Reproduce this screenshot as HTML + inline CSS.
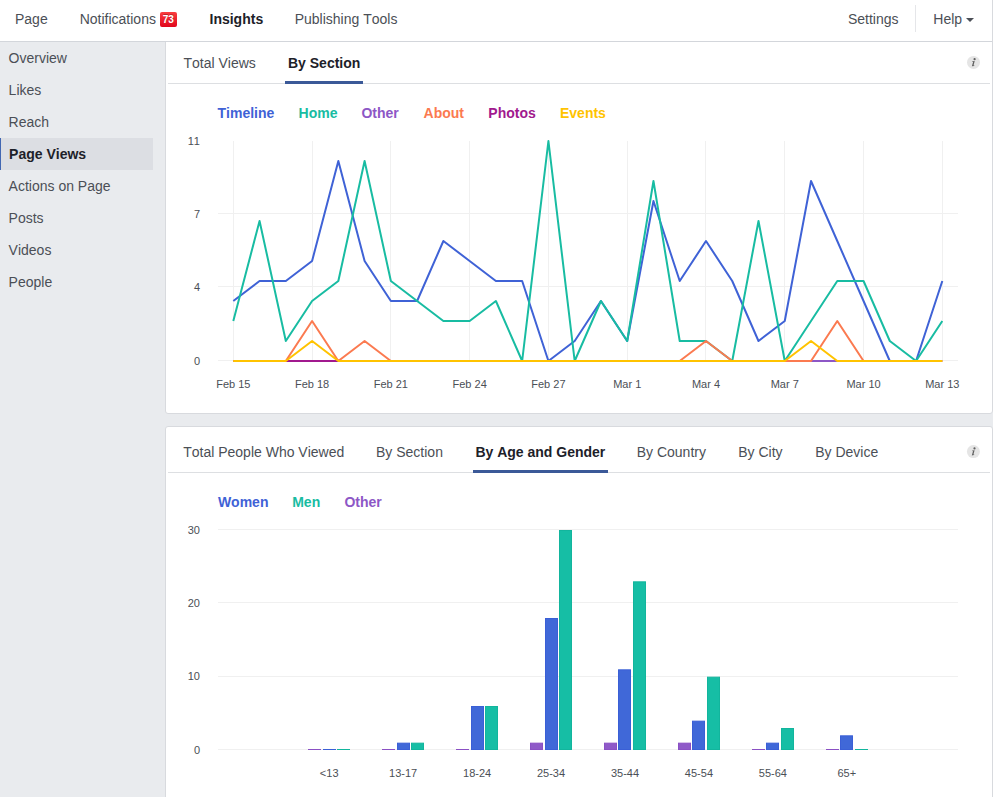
<!DOCTYPE html>
<html><head><meta charset="utf-8"><title>Insights</title>
<style>
html,body{margin:0;padding:0;width:993px;height:797px;overflow:hidden;background:#e9ebee;font-family:"Liberation Sans", sans-serif;}
.t{position:absolute;white-space:nowrap;font-family:"Liberation Sans", sans-serif;font-kerning:none;}
</style></head><body>
<div style="position:absolute;left:0px;top:0px;width:993px;height:797px;background:#e9ebee;"></div>
<div style="position:absolute;box-sizing:border-box;left:165px;top:38px;width:828px;height:376px;background:#fff;border:1px solid #d8dade;border-radius:0 0 3px 3px"></div>
<div style="position:absolute;box-sizing:border-box;left:165px;top:426px;width:828px;height:400px;background:#fff;border:1px solid #d8dade;border-radius:3px"></div>
<div style="position:absolute;left:0px;top:0px;width:993px;height:41px;background:#ffffff;"></div>
<div style="position:absolute;left:0px;top:41px;width:992px;height:1px;background:#d3d6db;"></div>
<div style="position:absolute;left:992px;top:0px;width:1px;height:42px;background:#d8dade;"></div>
<div class="t" style="left:15.00px;top:11.15px;font-size:14px;line-height:16px;font-weight:400;color:#4b4f56;">Page</div>
<div class="t" style="left:79.70px;top:11.15px;font-size:14px;line-height:16px;font-weight:400;color:#4b4f56;">Notifications</div>
<div style="position:absolute;left:160px;top:12px;width:17px;height:15px;border-radius:2px;background:linear-gradient(#fa3e3e,#e0061c);"></div>
<div class="t" style="left:162.70px;top:14.14px;font-size:10px;line-height:12px;font-weight:700;color:#fff;text-shadow:0 -1px 0 rgba(0,0,0,0.25)">73</div>
<div class="t" style="left:209.50px;top:11.15px;font-size:14px;line-height:16px;font-weight:700;color:#1d2129;">Insights</div>
<div class="t" style="left:294.70px;top:11.15px;font-size:14px;line-height:16px;font-weight:400;color:#4b4f56;">Publishing Tools</div>
<div class="t" style="left:847.90px;top:11.15px;font-size:14px;line-height:16px;font-weight:400;color:#4b4f56;">Settings</div>
<div style="position:absolute;left:915px;top:5px;width:1px;height:27px;background:#e5e6e9;"></div>
<div class="t" style="left:933.30px;top:11.15px;font-size:14px;line-height:16px;font-weight:400;color:#4b4f56;">Help</div>
<div style="position:absolute;left:965.8px;top:17.5px;width:0;height:0;border-left:4px solid transparent;border-right:4px solid transparent;border-top:4px solid #4b4f56"></div>
<div style="position:absolute;left:0px;top:138px;width:153px;height:32px;background:#dcdee3;"></div>
<div style="position:absolute;left:0px;top:138px;width:1px;height:32px;background:#4267b2;"></div>
<div class="t" style="left:8.60px;top:50.15px;font-size:14px;line-height:16px;font-weight:400;color:#4b4f56;">Overview</div>
<div class="t" style="left:8.60px;top:82.15px;font-size:14px;line-height:16px;font-weight:400;color:#4b4f56;">Likes</div>
<div class="t" style="left:8.60px;top:114.15px;font-size:14px;line-height:16px;font-weight:400;color:#4b4f56;">Reach</div>
<div class="t" style="left:9.10px;top:146.15px;font-size:14px;line-height:16px;font-weight:700;color:#1d2129;">Page Views</div>
<div class="t" style="left:8.60px;top:178.15px;font-size:14px;line-height:16px;font-weight:400;color:#4b4f56;">Actions on Page</div>
<div class="t" style="left:8.60px;top:210.15px;font-size:14px;line-height:16px;font-weight:400;color:#4b4f56;">Posts</div>
<div class="t" style="left:8.60px;top:242.15px;font-size:14px;line-height:16px;font-weight:400;color:#4b4f56;">Videos</div>
<div class="t" style="left:8.60px;top:274.15px;font-size:14px;line-height:16px;font-weight:400;color:#4b4f56;">People</div>
<div style="position:absolute;left:168px;top:83px;width:822px;height:1px;background:#dddfe2;"></div>
<div class="t" style="left:183.50px;top:55.15px;font-size:14px;line-height:16px;font-weight:400;color:#4b4f56;">Total Views</div>
<div class="t" style="left:288.00px;top:55.15px;font-size:14px;line-height:16px;font-weight:700;color:#1d2129;">By Section</div>
<div style="position:absolute;left:285px;top:81px;width:78px;height:3px;background:#3b5998;"></div>
<svg style="position:absolute;left:966px;top:55px" width="16" height="16" viewBox="0 0 16 16"><g transform="translate(0.50,0.40)"><circle cx="7" cy="7" r="6.5" fill="#e5e5e5"/><circle cx="8.1" cy="3.8" r="1.1" fill="#606060"/><path d="M5.9 5.9 L8.2 5.7 L7.0 10.0 L7.9 9.7 L7.6 10.5 L5.4 10.9 L6.6 6.6 L5.8 6.5 Z" fill="#606060"/></g></svg>
<div class="t" style="left:217.50px;top:105.15px;font-size:14px;line-height:16px;font-weight:700;color:#3f62d6;">Timeline</div>
<div class="t" style="left:298.60px;top:105.15px;font-size:14px;line-height:16px;font-weight:700;color:#18bca2;">Home</div>
<div class="t" style="left:361.40px;top:105.15px;font-size:14px;line-height:16px;font-weight:700;color:#8d57c6;">Other</div>
<div class="t" style="left:423.55px;top:105.15px;font-size:14px;line-height:16px;font-weight:700;color:#fb7a50;">About</div>
<div class="t" style="left:488.30px;top:105.15px;font-size:14px;line-height:16px;font-weight:700;color:#a1198e;">Photos</div>
<div class="t" style="left:560.00px;top:105.15px;font-size:14px;line-height:16px;font-weight:700;color:#ffc300;">Events</div>
<div class="t" style="left:170px;width:30px;text-align:right;top:134.5px;font-size:11px;line-height:13px;color:#4b4f56">11</div>
<div class="t" style="left:170px;width:30px;text-align:right;top:207.5px;font-size:11px;line-height:13px;color:#4b4f56">7</div>
<div class="t" style="left:170px;width:30px;text-align:right;top:280.5px;font-size:11px;line-height:13px;color:#4b4f56">4</div>
<div class="t" style="left:170px;width:30px;text-align:right;top:354.5px;font-size:11px;line-height:13px;color:#4b4f56">0</div>
<div class="t" style="left:193.30px;width:80px;text-align:center;top:377.5px;font-size:11px;line-height:13px;color:#4b4f56">Feb 15</div>
<div class="t" style="left:272.08px;width:80px;text-align:center;top:377.5px;font-size:11px;line-height:13px;color:#4b4f56">Feb 18</div>
<div class="t" style="left:350.86px;width:80px;text-align:center;top:377.5px;font-size:11px;line-height:13px;color:#4b4f56">Feb 21</div>
<div class="t" style="left:429.64px;width:80px;text-align:center;top:377.5px;font-size:11px;line-height:13px;color:#4b4f56">Feb 24</div>
<div class="t" style="left:508.42px;width:80px;text-align:center;top:377.5px;font-size:11px;line-height:13px;color:#4b4f56">Feb 27</div>
<div class="t" style="left:587.20px;width:80px;text-align:center;top:377.5px;font-size:11px;line-height:13px;color:#4b4f56">Mar 1</div>
<div class="t" style="left:665.98px;width:80px;text-align:center;top:377.5px;font-size:11px;line-height:13px;color:#4b4f56">Mar 4</div>
<div class="t" style="left:744.76px;width:80px;text-align:center;top:377.5px;font-size:11px;line-height:13px;color:#4b4f56">Mar 7</div>
<div class="t" style="left:823.54px;width:80px;text-align:center;top:377.5px;font-size:11px;line-height:13px;color:#4b4f56">Mar 10</div>
<div class="t" style="left:902.32px;width:80px;text-align:center;top:377.5px;font-size:11px;line-height:13px;color:#4b4f56">Mar 13</div>
<div style="position:absolute;left:168px;top:472px;width:822px;height:1px;background:#dddfe2;"></div>
<div class="t" style="left:183.20px;top:444.15px;font-size:14px;line-height:16px;font-weight:400;color:#4b4f56;">Total People Who Viewed</div>
<div class="t" style="left:376.00px;top:444.15px;font-size:14px;line-height:16px;font-weight:400;color:#4b4f56;">By Section</div>
<div class="t" style="left:475.40px;top:444.15px;font-size:14px;line-height:16px;font-weight:700;color:#1d2129;">By Age and Gender</div>
<div style="position:absolute;left:473px;top:470px;width:135px;height:3px;background:#3b5998;"></div>
<div class="t" style="left:636.70px;top:444.15px;font-size:14px;line-height:16px;font-weight:400;color:#4b4f56;">By Country</div>
<div class="t" style="left:738.20px;top:444.15px;font-size:14px;line-height:16px;font-weight:400;color:#4b4f56;">By City</div>
<div class="t" style="left:815.20px;top:444.15px;font-size:14px;line-height:16px;font-weight:400;color:#4b4f56;">By Device</div>
<svg style="position:absolute;left:966px;top:444px" width="16" height="16" viewBox="0 0 16 16"><g transform="translate(0.40,0.60)"><circle cx="7" cy="7" r="6.5" fill="#e5e5e5"/><circle cx="8.1" cy="3.8" r="1.1" fill="#606060"/><path d="M5.9 5.9 L8.2 5.7 L7.0 10.0 L7.9 9.7 L7.6 10.5 L5.4 10.9 L6.6 6.6 L5.8 6.5 Z" fill="#606060"/></g></svg>
<div class="t" style="left:217.90px;top:494.15px;font-size:14px;line-height:16px;font-weight:700;color:#3f62d6;">Women</div>
<div class="t" style="left:292.20px;top:494.15px;font-size:14px;line-height:16px;font-weight:700;color:#18bca2;">Men</div>
<div class="t" style="left:344.45px;top:494.15px;font-size:14px;line-height:16px;font-weight:700;color:#8d57c6;">Other</div>
<div class="t" style="left:170px;width:30px;text-align:right;top:523.5px;font-size:11px;line-height:13px;color:#4b4f56">30</div>
<div class="t" style="left:170px;width:30px;text-align:right;top:596.5px;font-size:11px;line-height:13px;color:#4b4f56">20</div>
<div class="t" style="left:170px;width:30px;text-align:right;top:669.5px;font-size:11px;line-height:13px;color:#4b4f56">10</div>
<div class="t" style="left:170px;width:30px;text-align:right;top:743.5px;font-size:11px;line-height:13px;color:#4b4f56">0</div>
<div class="t" style="left:289.20px;width:80px;text-align:center;top:767px;font-size:11px;line-height:13px;color:#4b4f56">&lt;13</div>
<div class="t" style="left:363.15px;width:80px;text-align:center;top:767px;font-size:11px;line-height:13px;color:#4b4f56">13-17</div>
<div class="t" style="left:437.10px;width:80px;text-align:center;top:767px;font-size:11px;line-height:13px;color:#4b4f56">18-24</div>
<div class="t" style="left:511.05px;width:80px;text-align:center;top:767px;font-size:11px;line-height:13px;color:#4b4f56">25-34</div>
<div class="t" style="left:585.00px;width:80px;text-align:center;top:767px;font-size:11px;line-height:13px;color:#4b4f56">35-44</div>
<div class="t" style="left:658.95px;width:80px;text-align:center;top:767px;font-size:11px;line-height:13px;color:#4b4f56">45-54</div>
<div class="t" style="left:732.90px;width:80px;text-align:center;top:767px;font-size:11px;line-height:13px;color:#4b4f56">55-64</div>
<div class="t" style="left:806.85px;width:80px;text-align:center;top:767px;font-size:11px;line-height:13px;color:#4b4f56">65+</div>
<svg style="position:absolute;left:0;top:0" width="993" height="797" viewBox="0 0 993 797"><rect x="233" y="141" width="1" height="220" fill="#f0f0f0"/><rect x="312" y="141" width="1" height="220" fill="#f0f0f0"/><rect x="390" y="141" width="1" height="220" fill="#f0f0f0"/><rect x="469" y="141" width="1" height="220" fill="#f0f0f0"/><rect x="548" y="141" width="1" height="220" fill="#f0f0f0"/><rect x="627" y="141" width="1" height="220" fill="#f0f0f0"/><rect x="705" y="141" width="1" height="220" fill="#f0f0f0"/><rect x="784" y="141" width="1" height="220" fill="#f0f0f0"/><rect x="863" y="141" width="1" height="220" fill="#f0f0f0"/><rect x="942" y="141" width="1" height="220" fill="#f0f0f0"/><rect x="218" y="213" width="740" height="1" fill="#f0f0f0"/><rect x="218" y="286" width="740" height="1" fill="#f0f0f0"/><rect x="218" y="360" width="740" height="1" fill="#f0f0f0"/><polyline points="233.30,301.00 259.56,281.00 285.82,281.00 312.08,261.00 338.34,161.00 364.60,261.00 390.86,301.00 417.12,301.00 443.38,241.00 469.64,261.00 495.90,281.00 522.16,281.00 548.42,361.00 574.68,341.00 600.94,301.00 627.20,341.00 653.46,201.00 679.72,281.00 705.98,241.00 732.24,281.00 758.50,341.00 784.76,321.00 811.02,181.00 837.28,241.00 863.54,301.00 889.80,361.00 916.06,361.00 942.32,281.00" fill="none" stroke="#3f62d6" stroke-width="2" stroke-linejoin="round"/><polyline points="233.30,321.00 259.56,221.00 285.82,341.00 312.08,301.00 338.34,281.00 364.60,161.00 390.86,281.00 417.12,301.00 443.38,321.00 469.64,321.00 495.90,301.00 522.16,361.00 548.42,141.00 574.68,361.00 600.94,301.00 627.20,341.00 653.46,181.00 679.72,341.00 705.98,341.00 732.24,361.00 758.50,221.00 784.76,361.00 811.02,321.00 837.28,281.00 863.54,281.00 889.80,341.00 916.06,361.00 942.32,321.00" fill="none" stroke="#18bca2" stroke-width="2" stroke-linejoin="round"/><polyline points="233.30,361.00 259.56,361.00 285.82,361.00 312.08,361.00 338.34,361.00 364.60,361.00 390.86,361.00 417.12,361.00 443.38,361.00 469.64,361.00 495.90,361.00 522.16,361.00 548.42,361.00 574.68,361.00 600.94,361.00 627.20,361.00 653.46,361.00 679.72,361.00 705.98,361.00 732.24,361.00 758.50,361.00 784.76,361.00 811.02,361.00 837.28,361.00 863.54,361.00 889.80,361.00 916.06,361.00 942.32,361.00" fill="none" stroke="#8d57c6" stroke-width="2" stroke-linejoin="round"/><polyline points="233.30,361.00 259.56,361.00 285.82,361.00 312.08,321.00 338.34,361.00 364.60,341.00 390.86,361.00 417.12,361.00 443.38,361.00 469.64,361.00 495.90,361.00 522.16,361.00 548.42,361.00 574.68,361.00 600.94,361.00 627.20,361.00 653.46,361.00 679.72,361.00 705.98,341.00 732.24,361.00 758.50,361.00 784.76,361.00 811.02,361.00 837.28,321.00 863.54,361.00 889.80,361.00 916.06,361.00 942.32,361.00" fill="none" stroke="#fb7a50" stroke-width="2" stroke-linejoin="round"/><polyline points="285.82,361.00 312.08,361.00 338.34,361.00" fill="none" stroke="#a1198e" stroke-width="2" stroke-linejoin="round"/><polyline points="233.30,361.00 259.56,361.00 285.82,361.00 312.08,341.00 338.34,361.00 364.60,361.00 390.86,361.00 417.12,361.00 443.38,361.00 469.64,361.00 495.90,361.00 522.16,361.00 548.42,361.00 574.68,361.00 600.94,361.00 627.20,361.00 653.46,361.00 679.72,361.00 705.98,361.00 732.24,361.00 758.50,361.00 784.76,361.00 811.02,341.00 837.28,361.00 863.54,361.00 889.80,361.00 916.06,361.00 942.32,361.00" fill="none" stroke="#ffc300" stroke-width="2" stroke-linejoin="round"/><rect x="218" y="529" width="740" height="1" fill="#f0f0f0"/><rect x="218" y="602" width="740" height="1" fill="#f0f0f0"/><rect x="218" y="676" width="740" height="1" fill="#f0f0f0"/><rect x="218" y="749" width="740" height="1" fill="#f0f0f0"/><rect x="308" y="749" width="13" height="1" fill="#8a50c4"/><rect x="323" y="749" width="13" height="1" fill="#3a5fd6"/><rect x="337" y="749" width="13" height="1" fill="#12b59d"/><rect x="382" y="749" width="13" height="1" fill="#8a50c4"/><rect x="397.50" y="743.17" width="12" height="6.33" fill="#4068d8" stroke="#3a5fd6" stroke-width="1"/><rect x="411.50" y="743.17" width="12" height="6.33" fill="#16bea5" stroke="#12b59d" stroke-width="1"/><rect x="456" y="749" width="13" height="1" fill="#8a50c4"/><rect x="471.50" y="706.50" width="12" height="43.00" fill="#4068d8" stroke="#3a5fd6" stroke-width="1"/><rect x="485.50" y="706.50" width="12" height="43.00" fill="#16bea5" stroke="#12b59d" stroke-width="1"/><rect x="530.50" y="743.17" width="12" height="6.33" fill="#8f5ac8" stroke="#8a50c4" stroke-width="1"/><rect x="545.50" y="618.50" width="12" height="131.00" fill="#4068d8" stroke="#3a5fd6" stroke-width="1"/><rect x="559.50" y="530.50" width="12" height="219.00" fill="#16bea5" stroke="#12b59d" stroke-width="1"/><rect x="604.50" y="743.17" width="12" height="6.33" fill="#8f5ac8" stroke="#8a50c4" stroke-width="1"/><rect x="618.50" y="669.83" width="12" height="79.67" fill="#4068d8" stroke="#3a5fd6" stroke-width="1"/><rect x="633.50" y="581.83" width="12" height="167.67" fill="#16bea5" stroke="#12b59d" stroke-width="1"/><rect x="678.50" y="743.17" width="12" height="6.33" fill="#8f5ac8" stroke="#8a50c4" stroke-width="1"/><rect x="692.50" y="721.17" width="12" height="28.33" fill="#4068d8" stroke="#3a5fd6" stroke-width="1"/><rect x="707.50" y="677.17" width="12" height="72.33" fill="#16bea5" stroke="#12b59d" stroke-width="1"/><rect x="752" y="749" width="13" height="1" fill="#8a50c4"/><rect x="766.50" y="743.17" width="12" height="6.33" fill="#4068d8" stroke="#3a5fd6" stroke-width="1"/><rect x="781.50" y="728.50" width="12" height="21.00" fill="#16bea5" stroke="#12b59d" stroke-width="1"/><rect x="826" y="749" width="13" height="1" fill="#8a50c4"/><rect x="840.50" y="735.83" width="12" height="13.67" fill="#4068d8" stroke="#3a5fd6" stroke-width="1"/><rect x="855" y="749" width="13" height="1" fill="#12b59d"/></svg>
</body></html>
